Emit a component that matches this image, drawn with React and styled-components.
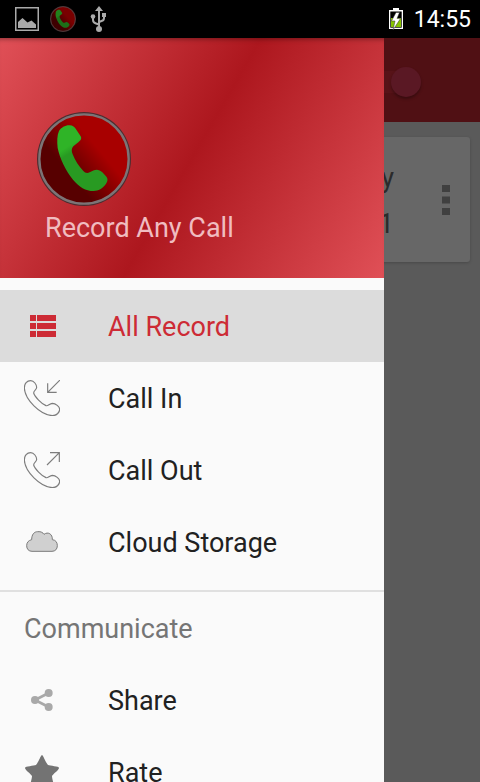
import { useState } from 'react'
import styled, { createGlobalStyle } from 'styled-components'

const colors = {
  accent: '#cd2b35',
  brandDark: '#ad171e',
  brandLight: '#e05057',
  drawer: '#fafafa',
  selected: '#dcdcdc',
  dark: '#212121',
  gray: '#757575',
  line: '#e0e0e0'
}

const communicateItems = [
  { id: 'share', label: 'Share', Icon: ShareIcon },
  { id: 'rate', label: 'Rate', Icon: StarIcon }
]

const recordItems = [
  { id: 'all', label: 'All Record', Icon: ListIcon },
  { id: 'in', label: 'Call In', Icon: CallInIcon },
  { id: 'out', label: 'Call Out', Icon: CallOutIcon },
  { id: 'cloud', label: 'Cloud Storage', Icon: CloudIcon }
]

export default function App () {
  const [current, setCurrent] = useState('all')

  return (
    <Screen>
      <GlobalStyle />
      <StatusBar>
        <StatusGroup $gap={11}>
          <PictureIcon />
          <LogoIcon size={26} dim />
          <UsbIcon />
        </StatusGroup>
        <StatusGroup $gap={11}>
          <BatteryIcon />
          <Clock>14:55</Clock>
        </StatusGroup>
      </StatusBar>
      <Body>
        <Toolbar>
          <Switch type="checkbox" role="switch" aria-label="Recording" defaultChecked />
        </Toolbar>
        <RecordList>
          <RecordCard>
            <RecordText>
              <span>y</span>
              <span>1</span>
            </RecordText>
            <MoreButton aria-label="More">
              <MoreIcon />
            </MoreButton>
          </RecordCard>
        </RecordList>
        <Drawer>
          <DrawerHeader>
            <LogoIcon size={94} />
            <AppName>Record Any Call</AppName>
          </DrawerHeader>
          <Menu>
            {recordItems.map(({ id, label, Icon }) => (
              <MenuItem key={id} $active={current === id} onClick={() => setCurrent(id)}>
                <IconBox><Icon /></IconBox>
                <MenuLabel>{label}</MenuLabel>
              </MenuItem>
            ))}
          </Menu>
          <Divider />
          <SubHeader>Communicate</SubHeader>
          {communicateItems.map(({ id, label, Icon }) => (
            <MenuItem key={id} $active={current === id} onClick={() => setCurrent(id)}>
              <IconBox><Icon /></IconBox>
              <MenuLabel>{label}</MenuLabel>
            </MenuItem>
          ))}
        </Drawer>
      </Body>
    </Screen>
  )
}

function LogoIcon ({ size, dim }) {
  const id = `logo${size}`
  return (
    <svg width={size} height={size} viewBox="0 0 282 282" opacity={dim ? 0.72 : 1}>
      <defs>
        <linearGradient id={`${id}-disc`} x1="0.2" y1="0.75" x2="0.8" y2="0.25">
          <stop offset="0.2" stopColor="#570000" />
          <stop offset="0.75" stopColor="#a80000" />
        </linearGradient>
        <linearGradient id={`${id}-phone`} x1="0.3" y1="0.2" x2="0.4" y2="0.4">
          <stop offset="0.3" stopColor="#2fb427" />
          <stop offset="0.8" stopColor="#289a22" />
        </linearGradient>
      </defs>
      <circle cx="141" cy="141" r="141" fill="#4b2d30" />
      <circle cx="141" cy="141" r="134" fill={`url(#${id}-disc)`} stroke="#7c7476" strokeWidth="7" />
      <path
        fill={`url(#${id}-phone)`}
        d="M98 40C107 40 113 45 118 53L131 73C135 81 131 85 124 91L109 103C103 109 103 118 107 127C114 146 126 163 139 177C144 183 151 184 158 181L171 175C180 171 188 174 196 181L207 193C214 202 212 208 206 217C197 230 184 237 170 237C146 237 126 225 108 203C85 174 69 141 62 108C60 89 60 70 66 57C73 46 86 39 98 40Z"
      />
    </svg>
  )
}

function PictureIcon () {
  return (
    <svg width="24" height="24" viewBox="0 0 24 24">
      <rect x="0.75" y="0.75" width="22.5" height="22.5" fill="none" stroke="#aaa" strokeWidth="1.5" />
      <path fill="#aaa" d="M3 21V15L7.500 11L12.500 15.500L16.500 13.500L21 17.500V21Z" />
    </svg>
  )
}

function UsbIcon () {
  return (
    <svg width="24" height="26" viewBox="0 0 24 26" fill="none" stroke="#aaa" strokeWidth="2">
      <path d="M12 4V22M6 11V14Q6 16.500 9 17.500L12 18.500M17 9V12Q17 14.500 14.500 15L12 16" />
      <path fill="#aaa" stroke="none" d="M12 0L16 5H8ZM15 7H19V11H15Z" />
      <circle cx="6" cy="10.500" r="2.300" fill="#aaa" stroke="none" />
      <circle cx="12" cy="23" r="3" fill="#aaa" stroke="none" />
    </svg>
  )
}

function BatteryIcon () {
  return (
    <svg width="14" height="23" viewBox="0 0 14 23">
      <path fill="#fff" d="M4 0H10V2H14V21H0V2H4Z" />
      <path fill="#000" d="M1.300 3.500H12.700V19.700H1.300Z" />
      <path fill="#86c300" d="M2 10H12V19H2Z" />
      <path fill="#fff" stroke="#333" strokeWidth="0.500" d="M7 4.500L2.500 13H6L4 22L11.500 10.500H8L10.500 4.500Z" />
    </svg>
  )
}

function MoreIcon () {
  return (
    <svg width="8" height="30" viewBox="0 0 8 30" fill="#404040">
      <path d="M0 0H8V7H0ZM0 11.500H8V18.500H0ZM0 23H8V30H0Z" />
    </svg>
  )
}

function ListIcon () {
  return (
    <svg width="28" height="22" viewBox="-2 0 28 22" fill={colors.accent}>
      <path d="M0 0H6V6H0ZM7 0H26V6H7ZM0 8H6V14H0ZM7 8H26V14H7ZM0 16H6V22H0ZM7 16H26V22H7Z" />
    </svg>
  )
}

const handset = 'M20 2C30 2 38 14 38 22C38 30 29 31 29 39C32 50 53 72 66 77C72 79 76 71 85 70C95 70 107 80 107 88C107 98 97 107 85 107C48 104 3 59 1 24C1 11 9 2 20 2Z'

function CallInIcon () {
  return (
    <svg width="36" height="36" viewBox="0 0 108 108" fill="none" stroke="#7d7d7d" strokeWidth="3.500">
      <path d={handset} />
      <path d="M108 0L71 37M71 10V37H98" />
    </svg>
  )
}

function CallOutIcon () {
  return (
    <svg width="36" height="36" viewBox="0 0 108 108" fill="none" stroke="#7d7d7d" strokeWidth="3.500">
      <path d={handset} />
      <path d="M69 39L106 2M78 2H106V30" />
    </svg>
  )
}

function CloudIcon () {
  return (
    <svg width="32" height="22" viewBox="0 0 96 66">
      <path
        fill="#d0d0d0"
        stroke="#7b7b7b"
        strokeWidth="3"
        d="M18 61C8 61 2 54 2 44C2 34 8 28 17 26C17 11 24 2 35 2C45 1 51 5 54 10C66 1 80 9 79 26C89 27 94 34 94 44C94 54 88 61 78 61Z"
      />
    </svg>
  )
}

function ShareIcon () {
  return (
    <svg width="22" height="22" viewBox="0 0 66 66" fill="#a9a9a9">
      <path d="M12 33L53 12M12 33L53 54" stroke="#a9a9a9" strokeWidth="8" />
      <circle cx="12" cy="33" r="12" />
      <circle cx="53" cy="12" r="12" />
      <circle cx="53" cy="54" r="12" />
    </svg>
  )
}

function StarIcon () {
  return (
    <svg width="36" height="36" viewBox="0 0 36 36" fill="#737373">
      <path d="M18 1C19 1 22 9 24 11C26 12 35 12 35 14C35 16 29 20 28 22C28 25 31 33 29 34C27 35 21 30 18 30C15 30 9 35 7 34C5 33 8 25 8 22C7 20 1 16 1 14C1 12 10 12 12 11C14 9 17 1 18 1Z" />
    </svg>
  )
}

const GlobalStyle = createGlobalStyle`
  * {
    box-sizing: border-box;
  }
  body {
    margin: 0;
    font-family: Roboto, "Noto Sans", sans-serif;
    background-color: #5a5a5a;
  }
  button {
    font: inherit;
    color: inherit;
    background: none;
    border: 0;
    padding: 0;
    cursor: pointer;
  }
  svg {
    display: block;
    flex-shrink: 0;
  }
`
const Screen = styled.div`
  display: flex;
  flex-direction: column;
  height: 100vh;
  overflow: hidden;
`
const StatusBar = styled.header`
  display: flex;
  justify-content: space-between;
  align-items: center;
  height: 38px;
  padding: 0 9px 0 15px;
  background-color: #000;
  color: #fff;
`
const StatusGroup = styled.div`
  display: flex;
  align-items: center;
  gap: ${({ $gap }) => $gap}px;
`
const Clock = styled.time`
  padding-top: 2px;
  font-size: 23px;
  line-height: 36px;
`
const Body = styled.div`
  position: relative;
  flex: 1;
  min-height: 0;
`
const Toolbar = styled.div`
  display: flex;
  justify-content: flex-end;
  align-items: center;
  height: 84px;
  padding: 4px 59px 0;
  background-color: #501014;
`
const Switch = styled.input`
  appearance: none;
  display: flex;
  justify-content: flex-end;
  align-items: center;
  width: 54px;
  height: 22px;
  margin: 0;
  cursor: pointer;
  border-radius: 11px;
  background: linear-gradient(90deg, #571318 60%, transparent 60%);

  &::before {
    content: '';
    width: 30px;
    height: 30px;
    border-radius: 50%;
    background-color: #5a1824;
    box-shadow: 0 2px 3px rgba(0, 0, 0, 0.3);
  }
  &:not(:checked) {
    justify-content: flex-start;
  }
`
const RecordList = styled.main`
  padding: 15px 10px;
`
const RecordCard = styled.article`
  display: flex;
  justify-content: flex-end;
  align-items: center;
  gap: 48px;
  height: 125px;
  padding-right: 20px;
  border-radius: 3px;
  background-color: #676767;
  box-shadow: 0 1px 3px rgba(0, 0, 0, 0.2);
`
const RecordText = styled.div`
  display: flex;
  flex-direction: column;
  align-items: flex-end;
  gap: 12px;
  padding-top: 2px;
  color: #2b2b2b;
  font-size: 27px;
  line-height: 34px;
`
const MoreButton = styled.button`
  display: flex;
`
const Drawer = styled.nav`
  position: absolute;
  top: 0;
  bottom: 0;
  left: 0;
  width: 80%;
  overflow: hidden;
  background-color: ${colors.drawer};
`
const DrawerHeader = styled.div`
  display: flex;
  flex-direction: column;
  justify-content: flex-end;
  height: 240px;
  padding: 0 37px 32px;
  background: linear-gradient(120deg, ${colors.brandLight}, ${colors.brandDark} 50%, ${colors.brandLight});
  box-shadow: inset 0 5px 5px -4px rgba(0, 0, 0, 0.4);
`
const AppName = styled.div`
  padding: 4px 8px 0;
  color: #f0bcc0;
  font-size: 27px;
  line-height: 36px;
`
const Menu = styled.div`
  padding: 12px 0;
`
const MenuItem = styled.button`
  display: flex;
  align-items: center;
  gap: 48px;
  width: 100%;
  height: 72px;
  padding: 0 24px;
  color: ${({ $active }) => ($active ? colors.accent : colors.dark)};
  background-color: ${({ $active }) => ($active ? colors.selected : 'transparent')};
  text-align: left;
`
const MenuLabel = styled.span`
  padding-top: 2px;
  font-size: 27px;
  line-height: 36px;
`
const IconBox = styled.span`
  display: flex;
  justify-content: center;
  align-items: center;
  width: 36px;
  height: 36px;
`
const Divider = styled.hr`
  height: 2px;
  margin: 0;
  border: 0;
  background-color: ${colors.line};
`
const SubHeader = styled.h2`
  margin: 0;
  padding: 2px 24px 0;
  color: ${colors.gray};
  font-size: 27px;
  font-weight: 400;
  line-height: 70px;
`
